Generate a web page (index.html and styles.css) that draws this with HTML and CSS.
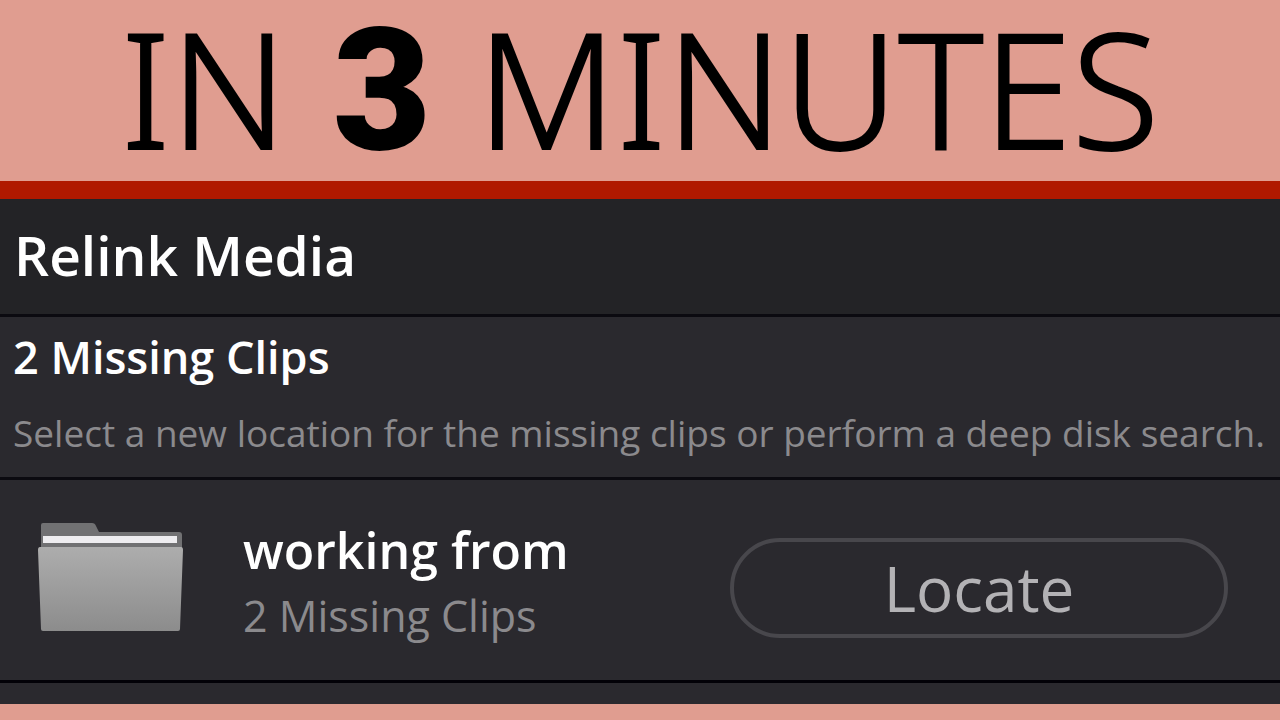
FILE: index.html
```html
<!DOCTYPE html>
<html lang="en">
<head>
  <meta charset="UTF-8">
  <meta name="viewport" content="width=device-width, initial-scale=1">
  <title>Relink Media in 3 Minutes</title>
  <link rel="stylesheet" href="styles.css">
</head>
<body>

  <header class="banner">
    <h1>IN <strong>3</strong> MINUTES</h1>
  </header>

  <main class="dialog">
    <div class="dialog-title">
      <h2>Relink Media</h2>
    </div>

    <section class="intro">
      <h3>2 Missing Clips</h3>
      <p>Select a new location for the missing clips or perform a deep disk search.</p>
    </section>

    <section class="clip-row">
      <svg class="folder" viewBox="0 0 148 112" aria-hidden="true">
        <defs>
          <linearGradient id="front" x1="0" y1="0" x2="0" y2="1">
            <stop offset="0" stop-color="#adadad"/>
            <stop offset="1" stop-color="#8c8c8c"/>
          </linearGradient>
        </defs>
        <path fill="#717173" d="M4 5q0-2 2-2h49q3 0 4 3l3 6h80q3 0 3 3v14H4z"/>
        <rect fill="#eeedf0" x="6" y="16" width="134" height="7"/>
        <path fill="url(#front)" d="M3 27h141q2 0 2 3l-3 79q0 2-2 2H6q-2 0-2-2L1 30q0-3 2-3z"/>
      </svg>
      <div class="clip-info">
        <h4>working from</h4>
        <p>2 Missing Clips</p>
      </div>
      <button class="locate" type="button">Locate</button>
    </section>

    <div class="dialog-end"></div>
  </main>

</body>
</html>
```
FILE: styles.css
```css
* {
  box-sizing: border-box;
}

body {
  margin: 0;
  background-color: #e09d90;
  font-family: "Open Sans", "Noto Sans", sans-serif;
  color: #fff;
}

h1, h2, h3, h4, p {
  margin: 0;
}

.banner {
  padding: 7px 0 14px;
  border-bottom: 18px solid #b01900;
  text-align: center;
}

.banner h1 {
  color: #000;
  font-family: "Noto Sans", sans-serif;
  font-size: 160px;
  font-weight: 300;
  line-height: 160px;
  white-space: nowrap;
  -webkit-text-stroke: 2px #000;
}

.banner strong {
  margin: 0 4px;
  font-family: Roboto, sans-serif;
  font-size: 170px;
  font-weight: 900;
  line-height: 1px;
  -webkit-text-stroke: 0;
}

/* Relink window */
.dialog {
  background-color: #2a292e;
}

.dialog-title {
  padding: 20px 14px 23px;
  background-color: #232326;
  border-bottom: 3px solid #0b0a10;
}

.dialog-title h2 {
  font-size: 55px;
  font-weight: 600;
  line-height: 72px;
}

.intro {
  padding: 8px 13px 16px;
  border-bottom: 3px solid #0b0a10;
}

.intro h3 {
  font-size: 45px;
  font-weight: 600;
  line-height: 64px;
}

.intro p {
  padding-top: 16px;
  color: #8b8a8d;
  font-size: 37px;
  line-height: 56px;
  white-space: nowrap;
}

.clip-row {
  display: flex;
  align-items: center;
  padding: 36px 52px 36px 37px;
  border-bottom: 3px solid #020107;
}

.folder {
  flex: none;
  align-self: flex-start;
  width: 148px;
  height: 112px;
  margin-top: 4px;
}

.clip-info {
  flex: 1;
  padding: 2px 0 0 58px;
}

.clip-info h4 {
  font-size: 50px;
  font-weight: 600;
  line-height: 64px;
}

.clip-info p {
  padding-top: 6px;
  color: #8b8a8d;
  font-size: 43px;
  line-height: 56px;
}

.locate {
  align-self: flex-end;
  width: 498px;
  height: 100px;
  margin-bottom: 6px;
  border: 4px solid #48474c;
  border-radius: 50px;
  background: none;
  color: #b3b2b5;
  font-family: inherit;
  font-size: 62px;
  cursor: pointer;
}

.dialog-end {
  height: 21px;
}
```
